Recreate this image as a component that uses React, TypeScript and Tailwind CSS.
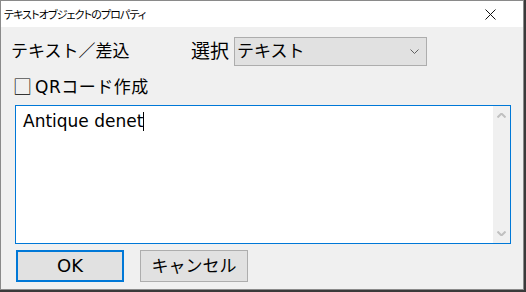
import React from "react";

const jp = "font-['DejaVu_Sans','Noto_Sans_CJK_JP',sans-serif]";

const App: React.FC = () => {
  return (
    <div className="w-[526px] h-[292px] bg-[#3a3a3a]">
      <div className={`w-[524px] h-[290px] border border-[#8a8a8a] bg-[#f0f0f0] flex flex-col text-black ${jp}`}>
        {/* Title bar */}
        <div className="h-[26px] shrink-0 bg-white flex items-center justify-between pl-[3px] pr-[27px]">
          <span className="text-[11px] leading-none font-['Noto_Sans_CJK_JP',sans-serif] [font-feature-settings:'palt'] tracking-[-0.9px]">
            テキストオブジェクトのプロパティ
          </span>
          <svg width="11" height="11" viewBox="0 0 11 11">
            <path d="M0.5 0.5 L10.5 10.5 M10.5 0.5 L0.5 10.5" stroke="#111" strokeWidth="1" />
          </svg>
        </div>

        {/* Body */}
        <div className="flex-1 flex flex-col pt-[10px]">
          <div className="flex items-center h-[29px] pl-[10px]">
            <span className="w-[180px] text-[17px] leading-none">テキスト／差込</span>
            <span className="w-[43px] text-[19px] leading-none">選択</span>
            <div className="w-[193px] h-[29px] border border-[#adadad] bg-[#e1e1e1] flex items-center justify-between pl-[2px] pr-[7px]">
              <span className="text-[17px] leading-none">テキスト</span>
              <svg width="9" height="5" viewBox="0 0 9 5">
                <path d="M0.5 0.5 L4.5 4.5 L8.5 0.5" stroke="#606060" strokeWidth="1" fill="none" />
              </svg>
            </div>
          </div>

          <div className="h-[22px] mt-[10px] pl-[12px] flex items-center text-[17px] leading-none">
            <span className="text-[19px] mr-[3px] font-light">□</span>
            <span className="tracking-[0.5px]">QRコード作成</span>
          </div>

          <div className="ml-[14px] mt-[7px] w-[496px] h-[139px] border border-[#0078d7] bg-white flex">
            <div className="flex-1 pl-[7px] pt-[4px] text-[17px] leading-[22px] flex items-start">
              <span>Antique denet</span>
              <span className="w-px h-[19px] bg-black mt-[2px]" />
            </div>
            <div className="w-[17px] bg-[#f0f0f0] flex flex-col justify-between items-center py-[7px]">
              <svg width="9" height="5" viewBox="0 0 9 5">
                <path d="M0.5 4.5 L4.5 0.5 L8.5 4.5" stroke="#c0c0c0" strokeWidth="2" fill="none" />
              </svg>
              <svg width="9" height="5" viewBox="0 0 9 5">
                <path d="M0.5 0.5 L4.5 4.5 L8.5 0.5" stroke="#c0c0c0" strokeWidth="2" fill="none" />
              </svg>
            </div>
          </div>

          <div className="flex gap-[16px] ml-[15px] mt-[6px]">
            <button className="w-[108px] h-[32px] border-2 border-[#0078d7] bg-[#e1e1e1] text-[18px] leading-none flex items-center justify-center">
              OK
            </button>
            <button className="w-[108px] h-[32px] border border-[#adadad] bg-[#e1e1e1] text-[17px] leading-none flex items-center justify-center">
              キャンセル
            </button>
          </div>
        </div>
      </div>
    </div>
  );
};

export default App;
